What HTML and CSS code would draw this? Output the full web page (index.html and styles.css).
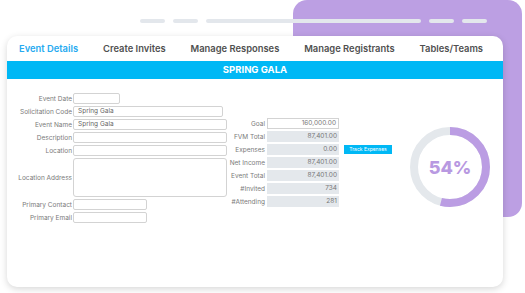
FILE: index.html
```html
<!DOCTYPE html>
<html lang="en">
<head>
  <meta charset="UTF-8" />
  <title>Spring Gala - Event Details</title>
  <link rel="stylesheet" href="styles.css">
</head>
<body>

  <div class="backdrop"></div>

  <div class="dash-row">
    <span class="dash"></span>
    <span class="dash"></span>
    <span class="dash long"></span>
    <span class="dash"></span>
    <span class="dash"></span>
  </div>

  <div class="card">
    <div class="tabs">
      <span class="tab active">Event Details</span>
      <span class="tab">Create Invites</span>
      <span class="tab">Manage Responses</span>
      <span class="tab">Manage Registrants</span>
      <span class="tab">Tables/Teams</span>
    </div>

    <div class="title-bar">SPRING GALA</div>

    <div class="form-body">
      <div class="details-grid">
        <label>Event Date</label>
        <div class="field w-date"></div>
        <label>Solicitation Code</label>
        <div class="field w-code">Spring Gala</div>
        <label>Event Name</label>
        <div class="field w-full">Spring Gala</div>
        <label>Description</label>
        <div class="field w-full"></div>
        <label>Location</label>
        <div class="field w-full"></div>
        <label>Location Address</label>
        <div class="field w-full area"></div>
        <label>Primary Contact</label>
        <div class="field w-short"></div>
        <label>Primary Email</label>
        <div class="field w-short"></div>
      </div>

      <div class="totals-grid">
        <label>Goal</label>
        <div class="num white">160,000.00</div>
        <span></span>
        <label>FVM Total</label>
        <div class="num">87,401.00</div>
        <span></span>
        <label>Expenses</label>
        <div class="num">0.00</div>
        <button class="track-btn">Track Expenses</button>
        <label>Net Income</label>
        <div class="num">87,401.00</div>
        <span></span>
        <label>Event Total</label>
        <div class="num">87,401.00</div>
        <span></span>
        <label>#Invited</label>
        <div class="num">734</div>
        <span></span>
        <label>#Attending</label>
        <div class="num">281</div>
        <span></span>
      </div>

      <div class="donut">
        <svg width="80" height="80" viewBox="0 0 80 80">
          <circle cx="40" cy="40" r="36" fill="none" stroke="#e4e8ec" stroke-width="8"/>
          <circle cx="40" cy="40" r="36" fill="none" stroke="#bb9de3" stroke-width="8"
                  stroke-dasharray="122.1 226.2" transform="rotate(-90 40 40)"/>
        </svg>
        <span class="donut-label">54%</span>
      </div>
    </div>
  </div>

</body>
</html>
```

FILE: styles.css
```css
body {
  margin: 0;
  width: 525px;
  height: 293px;
  overflow: hidden;
  position: relative;
  background: #ffffff;
  font-family: 'Inter', 'Liberation Sans', sans-serif;
}

/* purple panel behind the card */
.backdrop {
  position: absolute;
  left: 293px;
  top: 0;
  width: 229px;
  height: 217px;
  background: #bc9fe3;
  border-radius: 14px;
}

.dash-row {
  position: relative;
  display: flex;
  gap: 8px;
  padding: 19px 0 0 140px;
  height: 4px;
}

.dash {
  width: 25px;
  height: 4px;
  border-radius: 2px;
  background: #e3e7ec;
}

.dash.long {
  width: 215px;
}

.card {
  position: relative;
  margin: 13px 0 0 7px;
  width: 496px;
  height: 251px;
  background: #fff;
  border-radius: 10px;
  box-shadow: 0 2px 7px rgba(0, 0, 0, 0.16);
  overflow: hidden;
}

.tabs {
  height: 25px;
  display: flex;
  align-items: center;
  justify-content: space-between;
  padding: 0 20px 0 12px;
}

.tab {
  font-size: 9.4px;
  font-weight: 600;
  color: #505050;
}

.tab.active {
  color: #27aaf0;
}

.title-bar {
  height: 18px;
  line-height: 18px;
  background: #00b8f5;
  color: #fff;
  text-align: center;
  font-size: 9.5px;
  font-weight: 700;
}

.form-body {
  display: flex;
  align-items: flex-start;
  padding: 14px 0 0 8px;
}

.details-grid {
  display: grid;
  grid-template-columns: 57px 154px;
  column-gap: 1px;
  row-gap: 2px;
  align-items: center;
}

label {
  font-size: 6.5px;
  color: #7a7a7a;
  text-align: right;
  white-space: nowrap;
}

.field {
  height: 11px;
  box-sizing: border-box;
  border: 1px solid #d3d3d3;
  border-radius: 2px;
  font-size: 6.5px;
  color: #666;
  line-height: 9px;
  padding-left: 4px;
}

.w-date { width: 47px; }
.w-code { width: 150px; }
.w-full { width: 154px; }
.w-short { width: 74px; }

.field.area {
  height: 39px;
  border-radius: 3px;
}

.totals-grid {
  margin: 25px 0 0 1px;
  display: grid;
  grid-template-columns: 37px 72px 51px;
  column-gap: 2px;
  row-gap: 2px;
  align-items: center;
}

.num {
  height: 11px;
  box-sizing: border-box;
  background: #e4e8ec;
  font-size: 6.5px;
  color: #777;
  text-align: right;
  line-height: 11px;
  padding-right: 2px;
}

.num.white {
  background: #fff;
  border: 1px solid #d3d3d3;
  line-height: 9px;
}

.track-btn {
  margin-left: 3px;
  height: 9px;
  padding: 0;
  border: none;
  background: #00b8f5;
  color: #fff;
  font-family: inherit;
  font-size: 5px;
  line-height: 9px;
}

.donut {
  position: relative;
  margin: 34px 0 0 18px;
  width: 80px;
  height: 80px;
}

.donut svg {
  display: block;
}

.donut-label {
  position: absolute;
  inset: 0;
  display: flex;
  align-items: center;
  justify-content: center;
  font-size: 18px;
  font-weight: 800;
  color: #b899e1;
}
```
